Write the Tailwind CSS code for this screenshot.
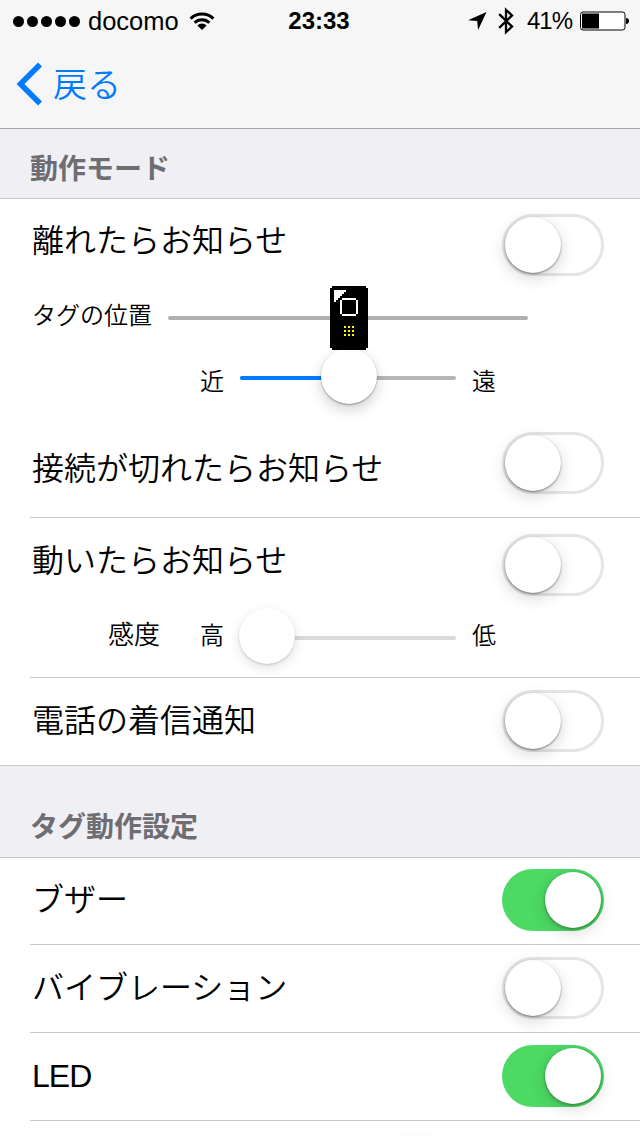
<!DOCTYPE html>
<html lang="ja">
<head>
  <meta charset="UTF-8">
  <meta name="viewport" content="width=640">
  <title>動作モード</title>
  <script src="https://cdn.jsdelivr.net/npm/@tailwindcss/browser@4"></script>
</head>
<body class="w-[640px] h-[1136px] overflow-hidden bg-white text-black font-[350] font-['Noto_Sans_CJK_JP',sans-serif]">

  <!-- Status bar + navigation -->
  <header class="h-[129px] bg-[#f6f6f7] border-b border-[#a9a9ac]">
    <div class="h-10 grid grid-cols-[1fr_auto_1fr] items-center pl-[11px] pr-[13px] pt-px font-['Liberation_Sans',sans-serif] font-normal">
      <div class="flex items-center pl-[2px]">
        <div class="flex gap-[3px]">
          <span class="size-[11px] rounded-full bg-black"></span>
          <span class="size-[11px] rounded-full bg-black"></span>
          <span class="size-[11px] rounded-full bg-black"></span>
          <span class="size-[11px] rounded-full bg-black"></span>
          <span class="size-[11px] rounded-full bg-black"></span>
        </div>
        <span class="ml-2 w-[91px] text-[25.5px] leading-[40px]">docomo</span>
        <svg class="ml-[10px]" width="26" height="20" viewBox="0 0 26 20" fill="none" stroke="#000" stroke-width="3">
          <path d="M1.6 7.6a16.4 16.4 0 0 1 22.8 0"/>
          <path d="M5.6 11.8a10.6 10.6 0 0 1 14.8 0"/>
          <path d="M13 19l-4.6-4.6a6.6 6.6 0 0 1 9.2 0z" fill="#000" stroke="none"/>
        </svg>
      </div>
      <span class="text-2xl leading-[40px] font-bold">23:33</span>
      <div class="flex items-center justify-end -mr-[3px]">
        <svg width="20" height="20" viewBox="0 0 20 20"><path d="M18.5 1L0 9.2l9.2.9.9 9z"/></svg>
        <svg class="ml-[10px]" width="16" height="28" viewBox="0 0 16 28" fill="none" stroke="#000" stroke-width="2.3"><path d="M1.2 7.2L14 19.6l-6 5.6V2.8l6 5.6L1.2 20.8"/></svg>
        <span class="ml-[13px] w-[46px] text-[24px] leading-[40px] tracking-[-1px]">41%</span>
        <svg class="ml-[7px]" width="50" height="20" viewBox="0 0 50 20">
          <rect x=".5" y="1" width="44.5" height="18" rx="2.5" fill="#fff" stroke="#000"/>
          <rect x="2" y="2.5" width="17" height="15"/>
          <path d="M46 7c2 0 3 1 3 3s-1 3-3 3z"/>
        </svg>
      </div>
    </div>
    <a class="flex items-center h-[88px] pl-4 text-[#007aff]">
      <svg width="27" height="44" viewBox="0 0 27 44" fill="none" stroke="#007aff" stroke-width="5.5"><path d="M24 2.5L4.5 22 24 41.5"/></svg>
      <span class="ml-[10px] mb-[3px] text-[34px] leading-[50px]">戻る</span>
    </a>
  </header>

  <h2 class="h-[70px] flex items-center pl-[30px] pt-[6px] bg-[#efeff4] border-b border-[#c8c7cc] text-[#6d6d72] text-[28px] leading-[40px] font-bold">動作モード</h2>

  <!-- Alerts by distance / connection -->
  <section>
    <div class="h-[92px] flex items-center justify-between pl-8 pr-9">
      <span class="mb-[14px] text-[32px] leading-[48px]">離れたらお知らせ</span>
      <div class="w-[102px] h-[62px] rounded-full border-3 border-[#e5e5e5]">
        <div class="size-[56px] rounded-full bg-white shadow-[0_1px_2px_rgba(0,0,0,.45),0_5px_16px_rgba(0,0,0,.16)]"></div>
      </div>
    </div>
    <div class="h-[54px] flex items-center pl-8">
      <span class="w-[136px] mb-[8px] text-[24px] leading-[36px]">タグの位置</span>
      <div class="w-[360px] h-1 flex items-center rounded-full bg-[#b0b0b0]">
        <svg class="relative z-10 shrink-0 ml-[162px]" width="38" height="64" viewBox="0 0 19 32" shape-rendering="crispEdges">
          <path d="M1 0h17v1h1v30h-1v1H1v-1H0V1h1z"/>
          <path fill="#fff" d="M2 2h6v1H7v1H6v1H5v1H4v1H3v1H2z"/>
          <path fill="#fff" d="M6 6h7v1H6zM6 14h7v1H6zM5 7h1v7H5zM13 7h1v7h-1z"/>
          <path fill="#ff0" d="M7 20h1v1H7zM9 20h1v1H9zM11 20h1v1h-1zM7 22h1v1H7zM9 22h1v1H9zM11 22h1v1h-1zM7 24h1v1H7zM9 24h1v1H9zM11 24h1v1h-1z"/>
        </svg>
      </div>
    </div>
    <div class="h-[66px] flex items-center pl-[200px]">
      <span class="w-10 text-[24px] leading-[36px] mt-[4px]">近</span>
      <div class="w-[216px] h-1 flex items-center rounded-full bg-[#b6b6b6]">
        <div class="w-[81px] h-1 shrink-0 rounded-l-full bg-[#007aff]"></div>
        <div class="size-[56px] shrink-0 mb-1 rounded-full bg-white shadow-[0_1px_2px_rgba(0,0,0,.35),0_6px_14px_rgba(0,0,0,.18)]"></div>
      </div>
      <span class="ml-4 text-[24px] leading-[36px] mt-[4px]">遠</span>
    </div>
    <div class="h-[106px] flex items-center justify-between pl-8 pr-9 pb-[2px]">
      <span class="mt-[5px] text-[32px] leading-[48px]">接続が切れたらお知らせ</span>
      <div class="w-[102px] h-[62px] rounded-full border-3 border-[#e5e5e5]">
        <div class="size-[56px] rounded-full bg-white shadow-[0_1px_2px_rgba(0,0,0,.45),0_5px_16px_rgba(0,0,0,.16)]"></div>
      </div>
    </div>
    <div class="ml-[30px] border-t border-[#c8c7cc]"></div>

    <div class="h-[94px] flex items-center justify-between pl-8 pr-9">
      <span class="mb-[14px] text-[32px] leading-[48px]">動いたらお知らせ</span>
      <div class="w-[102px] h-[62px] rounded-full border-3 border-[#e5e5e5]">
        <div class="size-[56px] rounded-full bg-white shadow-[0_1px_2px_rgba(0,0,0,.45),0_5px_16px_rgba(0,0,0,.16)]"></div>
      </div>
    </div>
    <div class="h-[65px] flex items-center pl-[108px] pb-[13px]">
      <span class="w-[92px] mb-[10px] text-[26px] leading-[36px]">感度</span>
      <span class="w-10 mb-[8px] text-[24px] leading-[36px]">高</span>
      <div class="w-[216px] h-1 flex items-center rounded-full bg-[#dadada]">
        <div class="size-[56px] shrink-0 -ml-px mb-1 rounded-full bg-white shadow-[0_1px_2px_rgba(0,0,0,.16),0_4px_12px_rgba(0,0,0,.12)]"></div>
      </div>
      <span class="ml-4 mb-[8px] text-[24px] leading-[36px]">低</span>
    </div>
    <div class="ml-[30px] border-t border-[#c8c7cc]"></div>

    <div class="h-[87px] flex items-center justify-between pl-8 pr-9 pb-px">
      <span class="mb-[6px] text-[32px] leading-[48px]">電話の着信通知</span>
      <div class="w-[102px] h-[62px] rounded-full border-3 border-[#e5e5e5]">
        <div class="size-[56px] rounded-full bg-white shadow-[0_1px_2px_rgba(0,0,0,.45),0_5px_16px_rgba(0,0,0,.16)]"></div>
      </div>
    </div>
  </section>

  <h2 class="h-[93px] flex items-center pl-[30px] pt-[26px] bg-[#efeff4] border-y border-[#c8c7cc] text-[#6d6d72] text-[28px] leading-[40px] font-bold">タグ動作設定</h2>

  <!-- Tag settings -->
  <section>
    <div class="h-[86px] flex items-center justify-between pl-8 pr-9 pb-[2px]">
      <span class="mb-[6px] text-[32px] leading-[48px]">ブザー</span>
      <div class="w-[102px] h-[62px] p-[3px] flex justify-end rounded-full bg-[#4cd964]">
        <div class="size-[56px] rounded-full bg-white shadow-[0_1px_3px_rgba(0,0,0,.4),0_5px_16px_rgba(0,0,0,.15)]"></div>
      </div>
    </div>
    <div class="ml-[30px] border-t border-[#c8c7cc]"></div>
    <div class="h-[87px] flex items-center justify-between pl-8 pr-9 pb-px">
      <span class="mb-[6px] text-[32px] leading-[48px]">バイブレーション</span>
      <div class="w-[102px] h-[62px] rounded-full border-3 border-[#e5e5e5]">
        <div class="size-[56px] rounded-full bg-white shadow-[0_1px_2px_rgba(0,0,0,.45),0_5px_16px_rgba(0,0,0,.16)]"></div>
      </div>
    </div>
    <div class="ml-[30px] border-t border-[#c8c7cc]"></div>
    <div class="h-[87px] flex items-center justify-between pl-8 pr-9 pb-px">
      <span class="text-[32px] leading-[48px] tracking-[-1px] font-normal font-['Liberation_Sans',sans-serif]">LED</span>
      <div class="w-[102px] h-[62px] p-[3px] flex justify-end rounded-full bg-[#4cd964]">
        <div class="size-[56px] rounded-full bg-white shadow-[0_1px_3px_rgba(0,0,0,.4),0_5px_16px_rgba(0,0,0,.15)]"></div>
      </div>
    </div>
    <div class="ml-[30px] border-t border-[#c8c7cc]"></div>
    <!-- next slider, only the shadow of its thumb reaches into view -->
    <div class="h-[15px] overflow-hidden flex items-end pl-[395px]">
      <div class="w-[40px] h-px rounded-t-full shadow-[0_0_6px_rgba(0,0,0,.12)]"></div>
    </div>
  </section>

</body>
</html>
